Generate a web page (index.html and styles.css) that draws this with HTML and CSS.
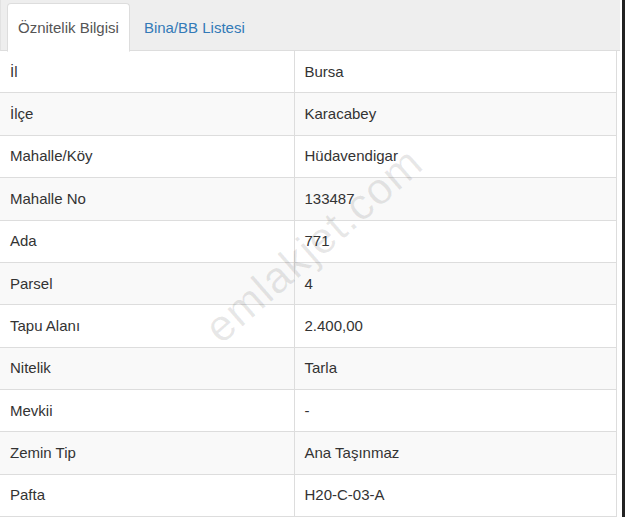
FILE: index.html
```html
<!DOCTYPE html>
<html lang="tr">
<head>
    <meta charset="UTF-8">
    <title>Parsel Bilgisi</title>
    <link rel="stylesheet" href="styles.css">
</head>
<body>

    <div class="panel">
        <ul class="tabs">
            <li class="tab active"><a href="#">Öznitelik Bilgisi</a></li>
            <li class="tab"><a href="#">Bina/BB Listesi</a></li>
        </ul>

        <table class="info-table">
            <tr><td>İl</td><td>Bursa</td></tr>
            <tr><td>İlçe</td><td>Karacabey</td></tr>
            <tr><td>Mahalle/Köy</td><td>Hüdavendigar</td></tr>
            <tr><td>Mahalle No</td><td>133487</td></tr>
            <tr><td>Ada</td><td>771</td></tr>
            <tr><td>Parsel</td><td>4</td></tr>
            <tr><td>Tapu Alanı</td><td>2.400,00</td></tr>
            <tr><td>Nitelik</td><td>Tarla</td></tr>
            <tr><td>Mevkii</td><td>-</td></tr>
            <tr><td>Zemin Tip</td><td>Ana Taşınmaz</td></tr>
            <tr><td>Pafta</td><td>H20-C-03-A</td></tr>
        </table>

        <div class="watermark">emlakjet.com</div>
    </div>

</body>
</html>
```

FILE: styles.css
```css
* {
    margin: 0;
    padding: 0;
    box-sizing: border-box;
}

body {
    font-family: "Liberation Sans", Arial, sans-serif;
    font-size: 15px;
    color: #333;
    background: #fff;
    width: 625px;
    height: 517px;
    overflow: hidden;
    border-right: 3px solid #222;
}

.panel {
    position: relative;
    width: 620px;
}

.tabs {
    list-style: none;
    display: flex;
    background: #eee;
    padding: 3px 0 0 6px;
    border-bottom: 1px solid #ddd;
    border-left: 1px solid #e2e2e2;
    height: 51px;
}

.tab {
    margin-right: 3px;
    margin-bottom: -1px;
}

.tab a {
    display: block;
    padding: 14px 10px 13px;
    line-height: 20px;
    color: #337ab7;
    text-decoration: none;
    border: 1px solid transparent;
    border-radius: 4px 4px 0 0;
}

.tab.active a {
    color: #555;
    background: #fff;
    border-color: #ddd;
    border-bottom-color: #fff;
}

.info-table {
    width: 617px;
    border-collapse: collapse;
}

.info-table td {
    padding: 10.7px 10px;
    line-height: 20px;
    border: 1px solid #ddd;
    border-top: none;
    vertical-align: middle;
}

.info-table td:first-child {
    width: 294px;
    border-left: none;
}

.info-table tr:nth-child(even) td {
    background: #f9f9f9;
}

.watermark {
    position: absolute;
    left: 178px;
    top: 220px;
    font-size: 44px;
    color: rgba(0, 0, 0, 0.09);
    transform: rotate(-41deg);
    pointer-events: none;
    white-space: nowrap;
    letter-spacing: 1px;
}
```
